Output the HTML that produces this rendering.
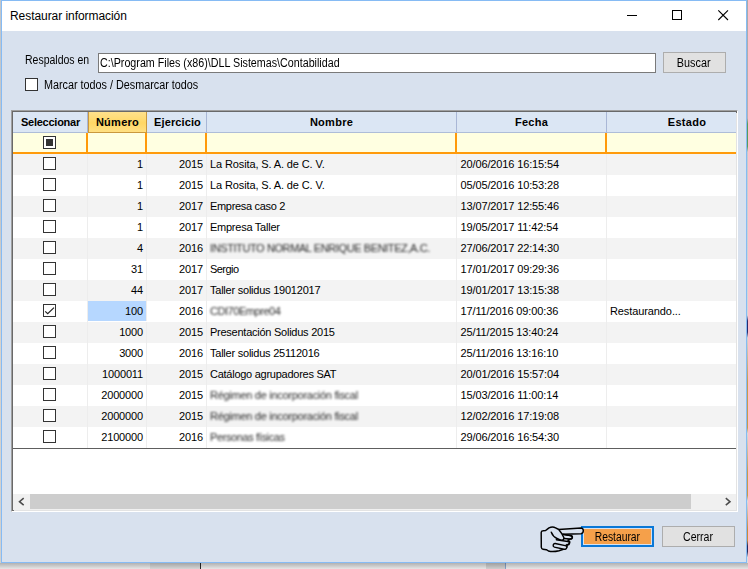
<!DOCTYPE html>
<html lang="es"><head><meta charset="utf-8"><title>Restaurar información</title>
<style>
*{box-sizing:border-box;margin:0;padding:0}
html,body{width:748px;height:569px;overflow:hidden}
body{position:relative;background:#ececec;font-family:"Liberation Sans",sans-serif;font-size:11px;color:#000}
.abs{position:absolute}
#frame{position:absolute;left:1px;top:0;width:746px;height:563px;background:#d8e1ee;border:1px solid #86bbf4}
#win{position:absolute;left:0;top:0;width:748px;height:569px}
#tb{position:absolute;left:2px;top:1px;width:744px;height:30px;background:#fff}
#title{position:absolute;left:8px;top:8px;font-size:12px;line-height:14px;white-space:nowrap;letter-spacing:-0.06px}
.lbl{position:absolute;white-space:nowrap;line-height:13px}
#txt{position:absolute;left:98px;top:53px;width:558px;height:20px;background:#fff;border:1px solid #7a7a7a;padding:3px 0 0 1px;line-height:13px;white-space:nowrap;font-size:12px}
#txt span{display:inline-block;transform:scaleX(0.893);transform-origin:0 0}
.btn{position:absolute;background:#e1e1e1;border:1px solid #adadad;text-align:center;white-space:nowrap}
.chk{position:absolute;width:13px;height:13px;background:#fff;border:1px solid #333}
#gridb{position:absolute;left:11px;top:110px;width:727px;height:402px;background:#696969;border-left:1px solid #a0a0a0;border-top:1px solid #a0a0a0;border-right:1px solid #fff;border-bottom:1px solid #fff}
#grid{position:absolute;left:13px;top:112px;width:723px;height:398px;background:#fff;overflow:hidden;box-shadow:1px 1px 0 #e3e3e3}
.h{position:absolute;top:0;height:21px;background:#dbe6f4;border-right:1px solid #a9b7d6;border-bottom:1px solid #aebdd8;font-weight:bold;text-align:center;line-height:21px;white-space:nowrap;letter-spacing:0.28px}
.r{position:absolute;left:0;width:724px;height:21px;background:#fff}
.r.odd{background:#f3f3f3}
.c{position:absolute;top:0;height:21px;line-height:21px;white-space:nowrap;letter-spacing:-0.1px;border-right:1px solid #ededed}
.cb{position:absolute;left:30px;top:3px;width:13px;height:13px;background:#fff;border:1px solid #333}
.cb svg{position:absolute;left:-1px;top:-1px}
.c0{left:0;width:75px}
.num{left:75px;width:59px;text-align:right;padding-right:3px;letter-spacing:-0.15px}
.num.sel{background:#b6d7ff;height:20px;line-height:21px}
.ej{left:134px;width:60px;text-align:right;padding-right:3px}
.nm{left:194px;width:250px;padding-left:3px;letter-spacing:-0.25px}
.fe{left:444px;width:150px;padding-left:3.5px;letter-spacing:-0.13px}
.es{left:594px;width:160px;padding-left:3px;border-right:none}
.b1{color:#2a2a2a;filter:blur(1.2px)}
.b2{display:inline-block;color:#2a2a2a;filter:blur(0.8px)}
</style></head><body>
<div class="abs" style="left:0;top:0;width:1px;height:569px;background:linear-gradient(#c2c6cb,#c8c8c8 40%,#dad3cb 55%,#d0d0d0)"></div>
<div class="abs" style="left:0;top:563px;width:748px;height:6px;background:#efefef"></div>
<div class="abs" style="left:150px;top:563px;width:50px;height:6px;background:#dedede"></div>
<div class="abs" style="left:200px;top:563px;width:1px;height:6px;background:#2a2a2a"></div>
<div class="abs" style="left:486px;top:563px;width:19px;height:6px;background:#d6d6d6"></div>
<div class="abs" style="left:505px;top:563px;width:1px;height:6px;background:#8aa6d0"></div>
<div class="abs" style="left:0;top:563px;width:748px;height:6px;background:linear-gradient(rgba(0,0,0,.26),rgba(0,0,0,.04))"></div>
<div class="abs" style="left:747px;top:0;width:1px;height:563px;background:linear-gradient(#a9a9a9 0,#b5b0b0 21%,#5a9a5a 22%,#5a9a5a 26%,#c9c9c9 27%,#d6d6d6 56%,#2a2a6a 57%,#2a2a6a 59%,#d2d2d2 60%,#c99a4a 68%,#c99a4a 76%,#d8d8d8 77%,#c99a4a 84%,#c99a4a 88%,#dcdcdc 89%,#c98a3a 94%,#c98a3a 96%,#2a2a5a 97%,#2a2a5a 98%,#ddd 99%)"></div>
<div id="frame"></div>
<div id="win">
 <div id="tb">
  <div id="title">Restaurar información</div>
  <svg class="abs" style="left:619px;top:4px" width="120" height="22" viewBox="0 0 120 22">
   <path d="M6 10.5 H16" stroke="#000" stroke-width="1" fill="none"/>
   <rect x="51.5" y="5.5" width="9" height="9" stroke="#000" stroke-width="1" fill="none"/>
   <path d="M97.3 5.3 L107 15 M107 5.3 L97.3 15" stroke="#000" stroke-width="1.1" fill="none"/>
  </svg>
 </div>
 <div class="lbl" style="left:25px;top:54px;font-size:12px;transform:scaleX(0.875);transform-origin:0 0">Respaldos en</div>
 <div id="txt"><span>C:\Program Files (x86)\DLL Sistemas\Contabilidad</span></div>
 <div class="btn" style="left:663px;top:52px;width:63px;height:21px;line-height:20px;font-size:12px"><span style="display:inline-block;position:relative;left:-1px;transform:scaleX(0.9)">Buscar</span></div>
 <div class="chk" style="left:25px;top:78px"></div>
 <div class="lbl" style="left:43.5px;top:79px;font-size:12px;transform:scaleX(0.9);transform-origin:0 0">Marcar todos / Desmarcar todos</div>

 <div id="gridb"></div>
 <div id="grid">
  <div class="h" style="left:0;width:75px;letter-spacing:-0.25px;padding-left:1px">Seleccionar</div>
  <div class="h" style="left:75px;width:59px;background:linear-gradient(#ffe18c,#ffd765 55%,#ffe084);border:1px solid #c9983e;border-top:none">Número</div>
  <div class="h" style="left:134px;width:60px;letter-spacing:0.1px;padding-left:2px">Ejercicio</div>
  <div class="h" style="left:194px;width:250px">Nombre</div>
  <div class="h" style="left:444px;width:150px">Fecha</div>
  <div class="h" style="left:594px;width:160px;border-right:none">Estado</div>
  <div class="abs" style="left:0;top:21px;width:724px;height:21px;background:#ffffe1;border-bottom:2px solid #ff9a0a"></div>
  <div class="abs" style="left:73px;top:21px;width:2px;height:21px;background:#ff9a0a"></div>
  <div class="abs" style="left:132px;top:21px;width:2px;height:21px;background:#ff9a0a"></div>
  <div class="abs" style="left:192px;top:21px;width:2px;height:21px;background:#ff9a0a"></div>
  <div class="abs" style="left:442px;top:21px;width:2px;height:21px;background:#ff9a0a"></div>
  <div class="abs" style="left:592px;top:21px;width:2px;height:21px;background:#ff9a0a"></div>
  <div class="abs" style="left:30px;top:24px;width:13px;height:13px;background:#fff;border:1px solid #333"><div class="abs" style="left:2px;top:2px;width:7px;height:7px;background:#333"></div></div>
  <div id="rows" class="abs" style="left:0;top:-112px;width:724px;height:0">
<div class="r odd" style="top:154px"><span class="c c0"></span><span class="cb"></span><span class="c num">1</span><span class="c ej">2015</span><span class="c nm" style="letter-spacing:-0.12px">La Rosita, S. A. de C. V.</span><span class="c fe">20/06/2016 16:15:54</span><span class="c es"></span></div>
<div class="r" style="top:175px"><span class="c c0"></span><span class="cb"></span><span class="c num">1</span><span class="c ej">2015</span><span class="c nm" style="letter-spacing:-0.12px">La Rosita, S. A. de C. V.</span><span class="c fe">05/05/2016 10:53:28</span><span class="c es"></span></div>
<div class="r odd" style="top:196px"><span class="c c0"></span><span class="cb"></span><span class="c num">1</span><span class="c ej">2017</span><span class="c nm" style="letter-spacing:-0.32px">Empresa caso 2</span><span class="c fe">13/07/2017 12:55:46</span><span class="c es"></span></div>
<div class="r" style="top:217px"><span class="c c0"></span><span class="cb"></span><span class="c num">1</span><span class="c ej">2017</span><span class="c nm" style="letter-spacing:-0.25px">Empresa Taller</span><span class="c fe">19/05/2017 11:42:54</span><span class="c es"></span></div>
<div class="r odd" style="top:238px"><span class="c c0"></span><span class="cb"></span><span class="c num">4</span><span class="c ej">2016</span><span class="c nm" style="letter-spacing:-0.4px"><span class="b1">INSTITUTO NORMAL ENRIQUE BENITEZ</span><span class="b2">,A.C.</span></span><span class="c fe">27/06/2017 22:14:30</span><span class="c es"></span></div>
<div class="r" style="top:259px"><span class="c c0"></span><span class="cb"></span><span class="c num">31</span><span class="c ej">2017</span><span class="c nm" style="letter-spacing:-0.55px">Sergio</span><span class="c fe">17/01/2017 09:29:36</span><span class="c es"></span></div>
<div class="r odd" style="top:280px"><span class="c c0"></span><span class="cb"></span><span class="c num">44</span><span class="c ej">2017</span><span class="c nm" style="letter-spacing:-0.23px">Taller solidus 19012017</span><span class="c fe">19/01/2017 13:15:38</span><span class="c es"></span></div>
<div class="r" style="top:301px"><span class="c c0"></span><span class="cb"><svg width="13" height="13" viewBox="0 0 13 13"><path d="M2.2 7.4 L4.7 9.7 L11 3.6" fill="none" stroke="#222" stroke-width="1.2"/></svg></span><span class="c num sel">100</span><span class="c ej">2016</span><span class="c nm" style="letter-spacing:-0.45px"><span class="b1">CDI70Empre04</span></span><span class="c fe">17/11/2016 09:00:36</span><span class="c es">Restaurando...</span></div>
<div class="r odd" style="top:322px"><span class="c c0"></span><span class="cb"></span><span class="c num">1000</span><span class="c ej">2015</span><span class="c nm" style="letter-spacing:-0.25px">Presentación Solidus 2015</span><span class="c fe">25/11/2015 13:40:24</span><span class="c es"></span></div>
<div class="r" style="top:343px"><span class="c c0"></span><span class="cb"></span><span class="c num">3000</span><span class="c ej">2016</span><span class="c nm" style="letter-spacing:-0.23px">Taller solidus 25112016</span><span class="c fe">25/11/2016 13:16:10</span><span class="c es"></span></div>
<div class="r odd" style="top:364px"><span class="c c0"></span><span class="cb"></span><span class="c num">1000011</span><span class="c ej">2015</span><span class="c nm" style="letter-spacing:-0.26px">Catálogo agrupadores SAT</span><span class="c fe">20/01/2016 15:57:04</span><span class="c es"></span></div>
<div class="r" style="top:385px"><span class="c c0"></span><span class="cb"></span><span class="c num">2000000</span><span class="c ej">2015</span><span class="c nm" style="letter-spacing:-0.28px"><span class="b1">Régimen de incorporación</span><span class="b2">&nbsp;fiscal</span></span><span class="c fe">15/03/2016 11:00:14</span><span class="c es"></span></div>
<div class="r odd" style="top:406px"><span class="c c0"></span><span class="cb"></span><span class="c num">2000000</span><span class="c ej">2015</span><span class="c nm" style="letter-spacing:-0.28px"><span class="b1">Régimen de incorporación</span><span class="b2">&nbsp;fiscal</span></span><span class="c fe">12/02/2016 17:19:08</span><span class="c es"></span></div>
<div class="r" style="top:427px"><span class="c c0"></span><span class="cb"></span><span class="c num">2100000</span><span class="c ej">2016</span><span class="c nm" style="letter-spacing:-0.38px"><span class="b1">Personas físicas</span></span><span class="c fe">29/06/2016 16:54:30</span><span class="c es"></span></div>
  </div>
  <div class="abs" style="left:0;top:336px;width:724px;height:1px;background:#5e5e5e"></div>
  <div class="abs" style="left:0;top:382px;width:724px;height:16px;background:#f0f0f0"></div>
  <div class="abs" style="left:17px;top:382px;width:661px;height:15px;background:#cdcdcd"></div>
  <svg class="abs" style="left:0;top:382px" width="724" height="17" viewBox="0 0 724 17">
   <path d="M10.7 4.2 L6.5 7.7 L10.7 11.2" fill="none" stroke="#4c4c4c" stroke-width="1.55"/>
   <path d="M712.8 4.2 L717 7.7 L712.8 11.2" fill="none" stroke="#4c4c4c" stroke-width="1.55"/>
  </svg>
 </div>

 <div class="abs" style="left:581px;top:526px;width:73px;height:21px;border:2px solid #0a78d7;background:#d7e1ee;padding:1px"><div style="width:67px;height:15px;background:#f5a04a;text-align:center;line-height:16px;font-size:12px"><span style="display:inline-block;transform:scaleX(0.86)">Restaurar</span></div></div>
 <div class="btn" style="left:662px;top:526px;width:73px;height:21px;line-height:20px;font-size:12px"><span style="display:inline-block;transform:scaleX(0.88)">Cerrar</span></div>
 <svg class="abs" style="left:534px;top:520px" width="56" height="36" viewBox="0 0 56 36">
  <g fill="#d8e1ee" stroke="#000" stroke-width="1.45" stroke-linejoin="round" stroke-linecap="round" transform="translate(0,0.3)">
   <path d="M7.2 12.3 Q7.2 10.6 9 10.5 L11.6 10.2 Q13.5 8.6 15 7.5 Q18.6 5.8 21.6 7.5 L24.7 9.2 L47 7.7 Q49.3 7.8 49.3 10.5 Q49.3 13.2 47 13.4 L29 13.9 L36.5 15.2 Q38.6 15.6 38.4 17 Q38.2 18.8 36 18.8 L33.8 19.8 Q36.3 20.6 35.6 22.5 Q35 24.4 33 24.3 Q33.6 26 32.4 27.7 Q31.5 29 29.5 29 L25 30.4 Q19 31.9 14.4 30.7 L12.4 29.4 L9 28.9 Q7.4 28.7 7.3 26.9 Z"/>
   <path d="M22.3 19.4 L33.8 21.2 Q35.8 21.6 35.5 23 Q35.1 24.8 33 24.6 L31.2 25.3" fill="none"/>
   <path d="M21.2 23.2 L31.2 25.3 Q33.2 25.8 32.8 27.3 Q32.2 29.2 30 29 L20.4 26.8 Q18.8 26.2 19.2 24.7 Q19.8 23 21.2 23.2 Z"/>
   <path d="M28.6 14 L36 15.2 Q38.5 15.6 38.3 17.1 Q38 18.8 35.8 18.7 L30 18.2" fill="none"/>
   <path d="M17.3 12 Q19 16.5 23 18.2 Q26 19.8 28 19.9 Q30.2 19.6 29.8 17.2 Q28 13 24.7 9.2" fill="#d8e1ee"/>
  </g>
 </svg>
</div>
</body></html>
